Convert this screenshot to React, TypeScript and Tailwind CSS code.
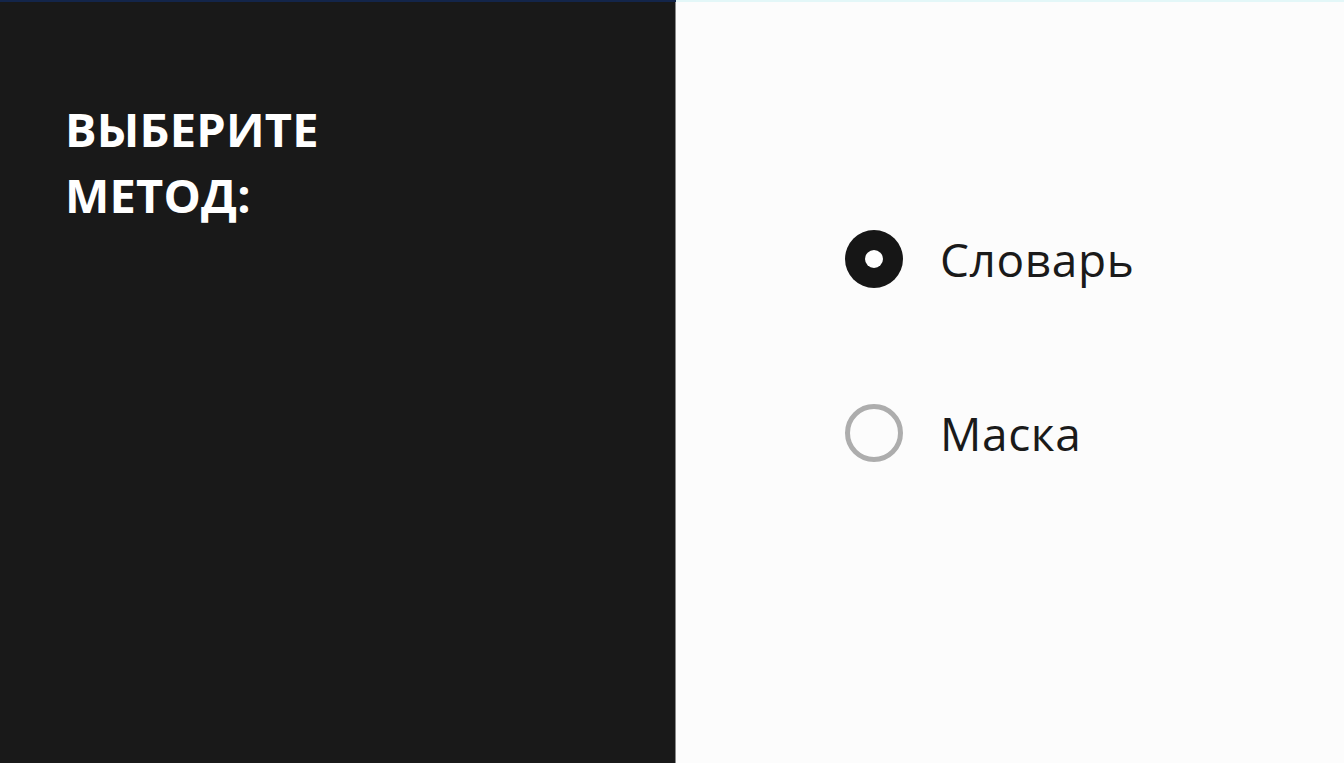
export default function App() {
  return (
    <div className="flex h-[763px] w-[1344px] flex-col overflow-hidden bg-[#fcfcfc] font-['Open_Sans',sans-serif]">
      <div className="flex h-[2px] shrink-0">
        <div className="w-[676px] bg-[#13254a]" />
        <div className="flex-1 bg-[#e3f7f8]" />
      </div>
      <div className="flex flex-1">
        {/* Left panel */}
        <div className="w-[676px] shrink-0 border-r border-[#8a8a8a] bg-[#191919] pl-[65px] pt-[94px]">
          <h1 className="text-[47px] font-bold leading-[66px] tracking-[0.2px] text-white">
            ВЫБЕРИТЕ
            <br />
            МЕТОД:
          </h1>
        </div>

        {/* Right panel */}
        <div className="flex flex-1 flex-col gap-[114px] pl-[169px] pt-[227px]">
          <label className="flex items-center gap-[37px]">
            <span className="flex h-[58px] w-[58px] items-center justify-center rounded-full bg-[#161616]">
              <span className="h-[18px] w-[18px] rounded-full bg-white" />
            </span>
            <span className="text-[46px] leading-[60px] tracking-[0.6px] text-[#1a1a1a]">Словарь</span>
          </label>
          <label className="flex items-center gap-[37px]">
            <span className="h-[58px] w-[58px] rounded-full border-[5px] border-[#adadad]" />
            <span className="text-[46px] leading-[60px] tracking-[0.6px] text-[#1a1a1a]">Маска</span>
          </label>
        </div>
      </div>
    </div>
  )
}
